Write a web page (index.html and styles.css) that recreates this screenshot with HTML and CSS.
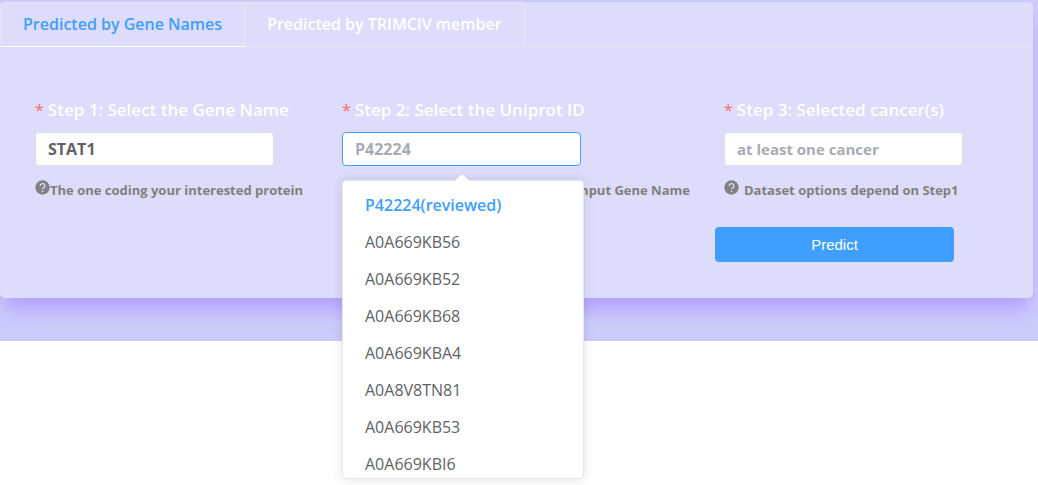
FILE: index.html
```html
<!DOCTYPE html>
<html lang="en">
<head>
<meta charset="utf-8">
<title>Predict</title>
<link rel="stylesheet" href="styles.css">
</head>
<body>
<svg class="defs" aria-hidden="true">
  <symbol id="question" viewBox="0 0 14 14">
    <circle cx="7" cy="7" r="6.7" fill="#808080"/>
    <path d="M4.8 5.5a2.2 2.1 0 1 1 3.1 1.9Q7 7.8 7 8.7" fill="none" stroke="#dddcfb" stroke-width="1.2"/>
    <circle cx="7" cy="10.6" r=".8" fill="#dddcfb"/>
  </symbol>
</svg>
<main class="page">
  <section class="card">
    <div class="tabs">
      <div class="tab-group" role="tablist">
        <button class="tab tab-active" type="button" role="tab" aria-selected="true">Predicted by Gene Names</button>
        <button class="tab" type="button" role="tab" aria-selected="false">Predicted by TRIMCIV member</button>
      </div>
    </div>
    <form class="steps">
      <div class="field">
        <label class="label" for="gene">Step 1: Select the Gene Name</label>
        <input class="input" id="gene" type="text" value="STAT1">
        <p class="hint"><svg class="icon"><use href="#question"/></svg>The one coding your interested protein</p>
      </div>
      <div class="field">
        <label class="label" for="uniprot">Step 2: Select the Uniprot ID</label>
        <div class="select">
          <input class="input input-focus" id="uniprot" type="text" role="combobox" aria-expanded="true" aria-controls="ids" placeholder="P42224">
          <div class="dropdown">
            <ul class="options" id="ids" role="listbox">
              <li class="option option-selected" role="option" aria-selected="true">P42224(reviewed)</li>
              <li class="option" role="option">A0A669KB56</li>
              <li class="option" role="option">A0A669KB52</li>
              <li class="option" role="option">A0A669KB68</li>
              <li class="option" role="option">A0A669KBA4</li>
              <li class="option" role="option">A0A8V8TN81</li>
              <li class="option" role="option">A0A669KB53</li>
              <li class="option" role="option">A0A669KBI6</li>
            </ul>
          </div>
        </div>
        <p class="hint hint-end">input Gene Name</p>
      </div>
      <div class="field">
        <label class="label" for="cancer">Step 3: Selected cancer(s)</label>
        <input class="input input-small" id="cancer" type="text" placeholder="at least one cancer">
        <p class="hint hint-spaced"><svg class="icon"><use href="#question"/></svg>Dataset options depend on Step1</p>
        <button class="submit" type="button">Predict</button>
      </div>
    </form>
  </section>
</main>
</body>
</html>
```
FILE: styles.css
```css
* { box-sizing: border-box; }
body {
  margin: 0;
  min-height: 100vh;
  background: #fff;
  font-family: "Open Sans", "Noto Sans", sans-serif;
}
.defs { position: absolute; width: 0; height: 0; }
.page {
  background: #cdcbfb;
  padding: 2px 5px 43px 0;
}
.card {
  background: #dddcfb;
  border-radius: 5px;
  box-shadow: 0 15px 20px -4px #b0a0ff;
  padding-bottom: 36px;
}
.tabs { border-bottom: 1px solid #e4e7ed; }
.tab-group {
  display: inline-flex;
  vertical-align: top;
  margin-bottom: -1px;
  border: 1px solid #e4e7ed;
  border-bottom: 0;
  border-radius: 4px 4px 0 0;
}
.tab {
  height: 44px;
  padding: 0 22px 2px;
  border: 0;
  border-bottom: 1px solid #e4e7ed;
  background: none;
  color: #fff;
  font: 600 16px "Open Sans", sans-serif;
  white-space: nowrap;
}
.tab + .tab { border-left: 1px solid #e4e7ed; }
.tab-active { color: #409eff; border-bottom-color: #fff; }
.steps {
  display: grid;
  grid-template-columns: 273fr 348fr 275fr;
  gap: 34px;
  padding: 51px 34px 0 35px;
}
.field { min-width: 0; }
.label {
  display: block;
  margin-bottom: 10px;
  color: #fff;
  font-size: 17px;
  font-weight: 600;
  line-height: 24px;
  white-space: nowrap;
}
.label::before {
  content: "*";
  margin-right: 4px;
  color: #f56c6c;
  font-size: 16px;
  font-weight: normal;
}
.select { position: relative; }
.input {
  display: block;
  width: 100%;
  max-width: 239px;
  height: 34px;
  padding: 0 12px 1px;
  border: 1px solid #dcdfe6;
  border-radius: 4px;
  outline: 0;
  background: #fff;
  color: #606266;
  font: bold 16px "Open Sans", sans-serif;
}
.input::placeholder { color: #a8abb2; opacity: 1; }
.input-focus { border-color: #409eff; }
.input-small { font-size: 15px; }
.hint {
  display: flex;
  margin: 14px 0 0;
  color: #808080;
  font-size: 13px;
  font-weight: bold;
  line-height: 20px;
  white-space: nowrap;
}
.hint-end { justify-content: flex-end; }
.hint-spaced { gap: 5px; }
.icon { flex: none; width: 15px; height: 15px; }
.submit {
  width: 100%;
  max-width: 239px;
  height: 35px;
  margin: 27px 0 0 -9px;
  border: 0;
  border-radius: 4px;
  background: #409eff;
  color: #fff;
  font: 15px "Liberation Sans", Arial, sans-serif;
}
.dropdown {
  position: absolute;
  z-index: 1;
  top: 48px;
  left: 0;
  width: 242px;
  border: 1px solid #e4e7ed;
  border-radius: 4px;
  background: #fff;
  box-shadow: 0 0 12px rgba(0, 0, 0, 0.12);
}
.dropdown::before {
  content: "";
  position: absolute;
  top: -5px;
  left: 114px;
  width: 10px;
  height: 10px;
  background: #fff;
  border-radius: 2px 0 0 0;
  transform: rotate(45deg);
}
.options {
  position: relative;
  height: 297px;
  margin: 0;
  padding: 6px 0 0;
  overflow: hidden;
  list-style: none;
}
.option {
  padding: 0 22px;
  color: #606266;
  font-size: 16px;
  line-height: 37px;
}
.option-selected { color: #409eff; font-weight: 600; }
```
